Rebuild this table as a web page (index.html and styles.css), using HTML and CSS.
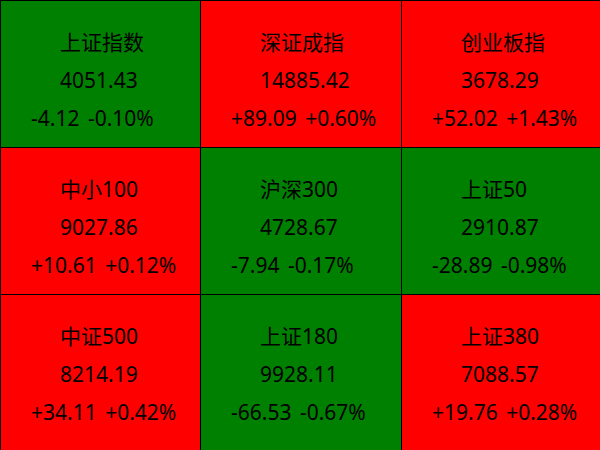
FILE: index.html
```html
<!DOCTYPE html>
<html lang="zh-CN">
<head>
    <meta charset="UTF-8">
    <title>指数行情</title>
    <link rel="stylesheet" href="styles.css">
</head>
<body>
    <div class="index-grid">
        <div class="index-card down">
            <div class="index-name">上证指数</div>
            <div class="index-price">4051.43</div>
            <div class="index-change">-4.12 -0.10%</div>
        </div>
        <div class="index-card up">
            <div class="index-name">深证成指</div>
            <div class="index-price">14885.42</div>
            <div class="index-change">+89.09 +0.60%</div>
        </div>
        <div class="index-card up">
            <div class="index-name">创业板指</div>
            <div class="index-price">3678.29</div>
            <div class="index-change">+52.02 +1.43%</div>
        </div>
        <div class="index-card up">
            <div class="index-name">中小100</div>
            <div class="index-price">9027.86</div>
            <div class="index-change">+10.61 +0.12%</div>
        </div>
        <div class="index-card down">
            <div class="index-name">沪深300</div>
            <div class="index-price">4728.67</div>
            <div class="index-change">-7.94 -0.17%</div>
        </div>
        <div class="index-card down">
            <div class="index-name">上证50</div>
            <div class="index-price">2910.87</div>
            <div class="index-change">-28.89 -0.98%</div>
        </div>
        <div class="index-card up">
            <div class="index-name">中证500</div>
            <div class="index-price">8214.19</div>
            <div class="index-change">+34.11 +0.42%</div>
        </div>
        <div class="index-card down">
            <div class="index-name">上证180</div>
            <div class="index-price">9928.11</div>
            <div class="index-change">-66.53 -0.67%</div>
        </div>
        <div class="index-card up">
            <div class="index-name">上证380</div>
            <div class="index-price">7088.57</div>
            <div class="index-change">+19.76 +0.28%</div>
        </div>
    </div>
</body>
</html>
```

FILE: styles.css
```css
* {
    margin: 0;
    padding: 0;
    box-sizing: border-box;
}

body {
    font-family: "Noto Sans", "Noto Sans CJK SC", sans-serif;
    background-color: #000000;
    color: #000000;
    overflow: hidden;
}

.index-grid {
    display: grid;
    grid-template-columns: 199px 200px 198px;
    grid-template-rows: 146px 146px 160px;
    gap: 1px;
    padding: 1px 0 0 1px;
    height: 100vh;
}

.index-card {
    padding: 22px 0 0 59px;
    font-size: 21px;
    line-height: 38px;
}

.index-card.up {
    background-color: #ff0000;
}

.index-card.down {
    background-color: #008000;
}

.index-change {
    margin-left: -29px;
    word-spacing: 3px;
    white-space: nowrap;
}
```
